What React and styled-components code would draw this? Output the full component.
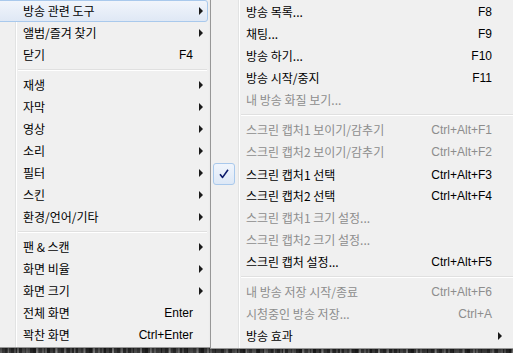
import * as React from 'react'
import styled, { createGlobalStyle, css } from 'styled-components'

const GlobalStyle = createGlobalStyle`
  html, body {
    margin: 0;
    padding: 0;
  }
  body {
    font-family: "Liberation Sans", "Noto Sans CJK KR", sans-serif;
    font-size: 12px;
    color: #000;
  }
`

const Screen = styled.div`
  width: 513px;
  height: 353px;
  overflow: hidden;
  display: flex;
  align-items: flex-start;
  background:
    repeating-linear-gradient(90deg, rgba(255,255,255,0.18) 0 2px, transparent 2px 5px, rgba(0,0,0,0.3) 5px 8px, rgba(255,255,255,0.1) 8px 11px, transparent 11px 14px),
    repeating-linear-gradient(90deg, #3b3b3b 0 7px, #5c5c5c 7px 9px, #2a2a2a 9px 17px, #6a6a6a 17px 19px);
`

const Menu = styled.div`
  flex: none;
  box-sizing: border-box;
  width: ${props => props.$width}px;
  margin-left: ${props => props.$offset}px;
  margin-top: ${props => props.$top}px;
  padding: 2px 2px 1px;
  border: 1px solid #979797;
  box-shadow: 2px 2px 3px rgba(0, 0, 0, 0.35);
  background:
    linear-gradient(to right, transparent 26px, #e2e3e3 26px, #e2e3e3 27px, #fff 27px, #fff 28px, transparent 28px),
    #f0f0f0;
  background-clip: padding-box;
  background-position: 1px 0;
  background-repeat: no-repeat, repeat;
  position: relative;
  z-index: ${props => props.$layer};
`

const Item = styled.div`
  box-sizing: border-box;
  height: 22px;
  display: grid;
  grid-template-columns: 30px 1fr auto ${props => props.$tail}px;
  align-items: center;
  color: ${props => (props.$disabled ? '#8d8d8d' : '#000')};
  border: 1px solid transparent;
  border-radius: 3px;
  ${props => props.$active && css`
    border-color: #a9c9ec;
    background: linear-gradient(to bottom, #f1f5fb, #dfe8f5);
  `}
`

const CheckBox = styled.span`
  box-sizing: border-box;
  width: 22px;
  height: 22px;
  margin: -1px 0 0 -1px;
  border: 1px solid #a9c9ec;
  border-radius: 3px;
  background: linear-gradient(to bottom, #f0f5fc, #dde8f6);
  display: flex;
  align-items: center;
  justify-content: center;
`

const Label = styled.span`
  grid-column: 2;
  white-space: nowrap;
  line-height: 20px;
  padding-left: 2px;
  font-family: "Noto Sans CJK KR", sans-serif;
`

const Shortcut = styled.span`
  grid-column: 3;
  white-space: nowrap;
  line-height: 20px;
  padding-left: 16px;
  text-align: right;
  font-family: "Liberation Sans", sans-serif;
`

const Arrow = styled.span`
  grid-column: 4;
  justify-self: start;
  margin-left: 6px;
  width: 0;
  height: 0;
  border-left: 4px solid ${props => (props.$disabled ? '#8d8d8d' : '#1a1a1a')};
  border-top: 4px solid transparent;
  border-bottom: 4px solid transparent;
`

const Separator = styled.div`
  height: 8px;
  display: flex;
  align-items: center;
  padding-left: 28px;
  padding-right: 1px;

  &::after {
    content: '';
    flex: 1;
    height: 0;
    border-top: 1px solid #e0e0e0;
    border-bottom: 1px solid #fff;
  }
`

const CheckMark = () => (
  <svg width='12' height='12' viewBox='0 0 12 12'>
    <path d='M2 6.2 L4.6 9.4 L10 1.8' fill='none' stroke='#0c1a6a' strokeWidth='1.6' strokeLinejoin='round' />
  </svg>
)

const mainMenu = [
  { label: '방송 관련 도구', sub: true, active: true },
  { label: '앨범/즐겨 찾기', sub: true },
  { label: '닫기', key: 'F4' },
  { sep: true },
  { label: '재생', sub: true },
  { label: '자막', sub: true },
  { label: '영상', sub: true },
  { label: '소리', sub: true },
  { label: '필터', sub: true },
  { label: '스킨', sub: true },
  { label: '환경/언어/기타', sub: true },
  { sep: true },
  { label: '팬 & 스캔', sub: true },
  { label: '화면 비율', sub: true },
  { label: '화면 크기', sub: true },
  { label: '전체 화면', key: 'Enter' },
  { label: '꽉찬 화면', key: 'Ctrl+Enter' }
]

const broadcastMenu = [
  { label: '방송 목록...', key: 'F8' },
  { label: '채팅...', key: 'F9' },
  { label: '방송 하기...', key: 'F10' },
  { label: '방송 시작/중지', key: 'F11' },
  { label: '내 방송 화질 보기...', disabled: true },
  { sep: true },
  { label: '스크린 캡처1 보이기/감추기', key: 'Ctrl+Alt+F1', disabled: true },
  { label: '스크린 캡처2 보이기/감추기', key: 'Ctrl+Alt+F2', disabled: true },
  { label: '스크린 캡처1 선택', key: 'Ctrl+Alt+F3', checked: true },
  { label: '스크린 캡처2 선택', key: 'Ctrl+Alt+F4' },
  { label: '스크린 캡처1 크기 설정...', disabled: true },
  { label: '스크린 캡처2 크기 설정...', disabled: true },
  { label: '스크린 캡처 설정...', key: 'Ctrl+Alt+F5' },
  { sep: true },
  { label: '내 방송 저장 시작/종료', key: 'Ctrl+Alt+F6', disabled: true },
  { label: '시청중인 방송 저장...', key: 'Ctrl+A', disabled: true },
  { label: '방송 효과', sub: true }
]

const MenuList = ({ items, tail }) => items.map((item, i) => {
  if (item.sep) return <Separator key={i} />
  return (
    <Item key={i} $tail={tail} $active={item.active} $disabled={item.disabled}>
      {item.checked ? <CheckBox><CheckMark /></CheckBox> : <span />}
      <Label>{item.label}</Label>
      {item.key && <Shortcut>{item.key}</Shortcut>}
      {item.sub && <Arrow $disabled={item.disabled} />}
    </Item>
  )
})

export default function App () {
  return (
    <Screen>
      <GlobalStyle />
      <Menu $width={224} $offset={-13} $top={-3} $layer={1}>
        <MenuList items={mainMenu} tail={14} />
      </Menu>
      <Menu $width={320} $offset={-1} $top={-2} $layer={2}>
        <MenuList items={broadcastMenu} tail={34} />
      </Menu>
    </Screen>
  )
}
